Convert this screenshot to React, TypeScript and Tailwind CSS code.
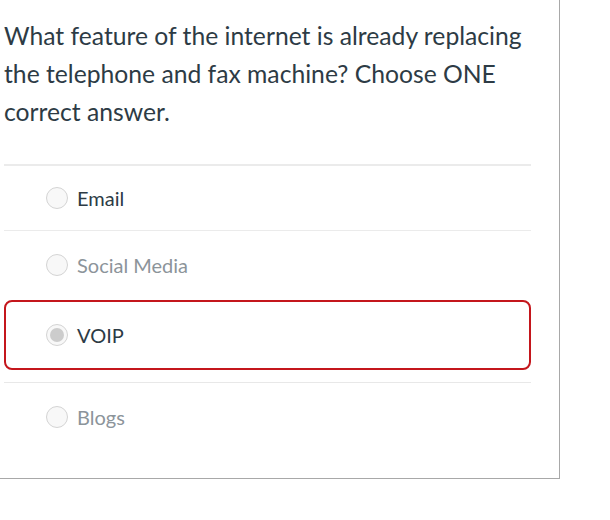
import React from "react";

const options = [
  { label: "Email", muted: false, selected: false, h: "h-[65px]" },
  { label: "Social Media", muted: true, selected: false, h: "h-[68px]" },
  { label: "VOIP", muted: false, selected: true, h: "" },
  { label: "Blogs", muted: true, selected: false, h: "h-[68px]" },
];

function Radio({ checked }: { checked: boolean }) {
  return (
    <span className="flex h-[22px] w-[22px] shrink-0 items-center justify-center rounded-full border border-[#d4d4d4] bg-[#f8f8f8]">
      {checked && <span className="h-[14px] w-[14px] rounded-full bg-[#cccccc]" />}
    </span>
  );
}

export default function App() {
  return (
    <div className="h-[520px] w-[610px] bg-white" style={{ fontFamily: "Lato, 'Noto Sans', sans-serif" }}>
      <div className="h-[479px] w-[560px] border-r border-b border-[#a8a8a8] pl-1 pr-[28px]">
        <h1 className="-mr-[14px] pt-[17px] pb-[33px] text-[24.7px] leading-[38px] font-normal text-[#2d3b45]">
          What feature of the internet is already replacing the telephone and fax machine? Choose ONE
          correct answer.
        </h1>
        <div className="border-t-2 border-[#ebebeb]">
          {options.map((o, i) =>
            o.selected ? (
              <div key={i} className="mt-[1px]">
                <div className="flex h-[70px] items-center gap-[9px] rounded-lg border-2 border-[#c4161c] pl-[40px]">
                  <Radio checked />
                  <span className="text-[20px] text-[#2d3b45]">{o.label}</span>
                </div>
                <div className="mt-[12px] border-t border-[#e8e8e8]" />
              </div>
            ) : (
              <div
                key={i}
                className={
                  "flex items-center gap-[9px] pl-[42px] " +
                  o.h +
                  (i === 0 ? " border-b border-[#ebebeb]" : "")
                }
              >
                <Radio checked={false} />
                <span className={"text-[20px] " + (o.muted ? "text-[#8c949a]" : "text-[#2d3b45]")}>
                  {o.label}
                </span>
              </div>
            )
          )}
        </div>
      </div>
    </div>
  );
}
